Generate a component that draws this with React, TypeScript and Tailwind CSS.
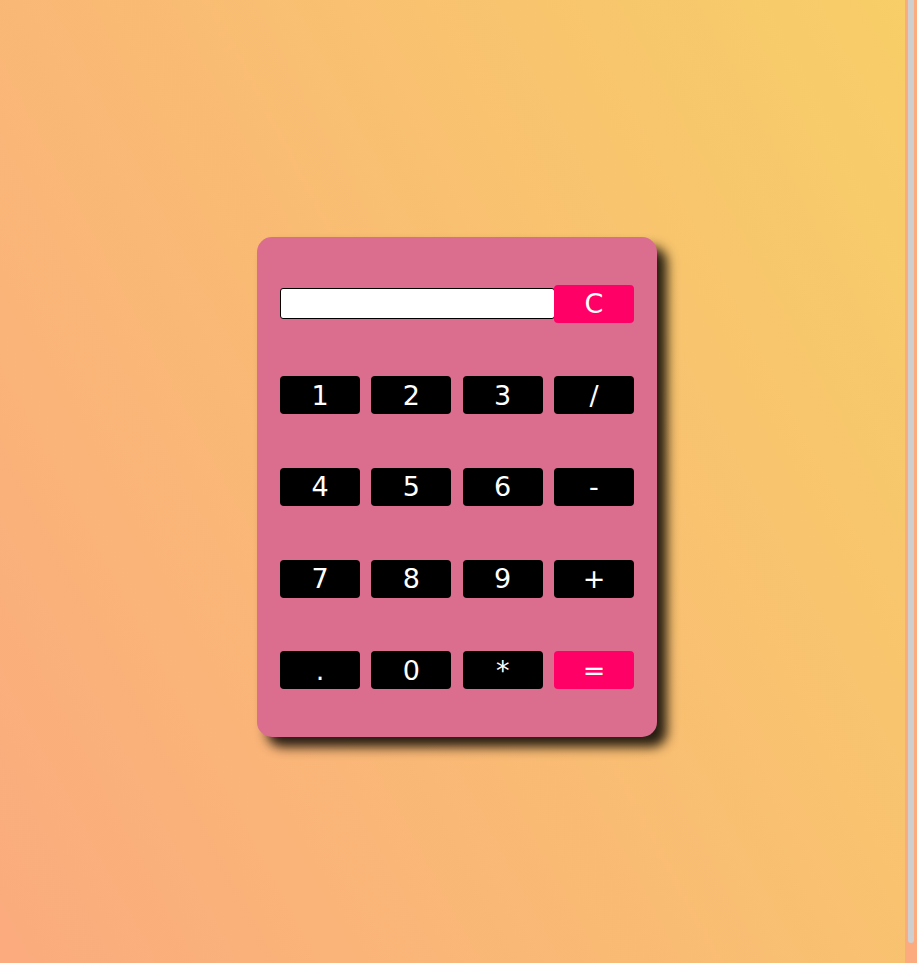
import * as React from "react";

const rows = [
  ["1", "2", "3", "/"],
  ["4", "5", "6", "-"],
  ["7", "8", "9", "+"],
  [".", "0", "*", "="],
];

const btn =
  "h-[38px] w-[80px] rounded-[4px] text-[27px] leading-none text-white flex items-center justify-center font-['DejaVu_Sans',sans-serif]";

export default function App() {
  const [value, setValue] = React.useState("");

  const press = (k: string) => {
    if (k === "=") {
      try {
        // eslint-disable-next-line no-eval
        setValue(String(eval(value)));
      } catch {
        setValue("Error");
      }
      return;
    }
    setValue((v) => v + k);
  };

  return (
    <div className="flex h-[963px] w-[917px] overflow-hidden bg-[#fbab7e]">
      <div className="h-full w-[905px] bg-[linear-gradient(62deg,#fbab7e_0%,#f7ce68_100%)] pl-[257px] pt-[237px]">
        <div className="h-[500px] w-[400px] rounded-[15px] bg-[#db6e8f] px-[23px] py-[21px] shadow-[10px_10px_12px_rgba(0,0,0,0.85)]">
          <div className="grid auto-rows-[91.6px] grid-cols-[80px_80px_80px_80px] items-center gap-x-[11.33px]">
            <input
              value={value}
              readOnly
              className="col-span-3 h-[31px] w-[275px] rounded-[3px] border border-black bg-white px-1 text-[20px] outline-none"
            />
            <button className={`${btn} bg-[#ff0066]`} onClick={() => setValue("")}>
              C
            </button>
            {rows.flat().map((k) => (
              <button
                key={k}
                className={`${btn} ${k === "=" ? "bg-[#ff0066]" : "bg-black"}`}
                onClick={() => press(k)}
              >
                {k}
              </button>
            ))}
          </div>
        </div>
      </div>
      <div className="flex w-[12px] justify-center">
        <div className="h-[943px] w-[6px] rounded-b-full bg-[#cfcfcf]" />
      </div>
    </div>
  );
}
